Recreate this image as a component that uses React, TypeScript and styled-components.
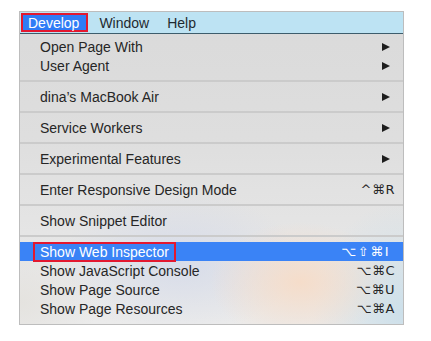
import React from "react";
import styled, { createGlobalStyle } from "styled-components";

const Global = createGlobalStyle`
  html, body { margin: 0; padding: 0; background: #ffffff; }
  body { font-family: "Liberation Sans", Arial, "DejaVu Sans", sans-serif; }
`;

const Page = styled.div`
  padding: 11px 0 0 19px;
`;

const Panel = styled.div`
  width: 383px;
  border: 1px solid #bdbdbd;
  background:
    radial-gradient(ellipse 90px 60px at 280px 270px, rgba(246, 220, 200, 0.95), rgba(246, 220, 200, 0) 100%),
    radial-gradient(ellipse 120px 70px at 160px 250px, rgba(212, 218, 234, 0.85), rgba(212, 218, 234, 0) 100%),
    radial-gradient(ellipse 90px 110px at 383px 300px, rgba(203, 223, 234, 0.95), rgba(203, 223, 234, 0) 100%),
    radial-gradient(ellipse 80px 60px at 0px 290px, rgba(228, 226, 222, 0.9), rgba(228, 226, 222, 0) 100%),
    linear-gradient(180deg, #dadada 0%, #dedede 40%, #e6e6e6 75%, #ebebeb 100%);
`;

const MenuBar = styled.div`
  display: flex;
  align-items: stretch;
  height: 21px;
  background: #bde3f3;
  border-bottom: 1px solid #3d5d6c;
`;

const BarItem = styled.div<{ $active?: boolean }>`
  display: flex;
  align-items: center;
  font-size: 14px;
  color: ${(p) => (p.$active ? "#ffffff" : "#1f2a30")};
  ${(p) =>
    p.$active
      ? `
    margin: 1px 2px 0 1px;
    height: 15px;
    padding: 0 7px 0 5px;
    background: #2f7cf6;
    border: 2px solid #e3182f;
  `
      : `
    padding: 0 9px;
  `}
`;

const List = styled.div`
  display: flex;
  flex-direction: column;
  padding: 3px 0 6px;
`;

const Row = styled.div<{ $selected?: boolean }>`
  display: flex;
  align-items: center;
  justify-content: space-between;
  height: 19px;
  padding: 0 8px 0 20px;
  font-size: 14px;
  color: ${(p) => (p.$selected ? "#ffffff" : "#262626")};
  background: ${(p) => (p.$selected ? "#3a83f6" : "transparent")};
`;

const Label = styled.span<{ $boxed?: boolean }>`
  white-space: nowrap;
  ${(p) =>
    p.$boxed
      ? `
    margin-left: -7px;
    padding: 0 5px;
    height: 16px;
    line-height: 16px;
    border: 2px solid #e3182f;
  `
      : ""}
`;

const Shortcut = styled.span<{ $inset?: boolean }>`
  font-family: "DejaVu Sans", "Liberation Sans", sans-serif;
  font-size: 13px;
  letter-spacing: ${(p) => (p.$inset ? "1.5px" : "0.5px")};
  margin-right: ${(p) => (p.$inset ? "5px" : "0")};
  white-space: nowrap;
`;

const Arrow = styled.span`
  width: 0;
  height: 0;
  margin-right: 5px;
  border-top: 4.5px solid transparent;
  border-bottom: 4.5px solid transparent;
  border-left: 8px solid #1e1e1e;
`;

const Separator = styled.div`
  height: 12px;
  display: flex;
  align-items: center;
  &::after {
    content: "";
    flex: 1;
    height: 2px;
    background: #cbcbcb;
  }
`;

type Item =
  | { kind: "sep" }
  | { kind: "item"; label: string; sub?: boolean; shortcut?: string; selected?: boolean };

const items: Item[] = [
  { kind: "item", label: "Open Page With", sub: true },
  { kind: "item", label: "User Agent", sub: true },
  { kind: "sep" },
  { kind: "item", label: "dina\u2019s MacBook Air", sub: true },
  { kind: "sep" },
  { kind: "item", label: "Service Workers", sub: true },
  { kind: "sep" },
  { kind: "item", label: "Experimental Features", sub: true },
  { kind: "sep" },
  { kind: "item", label: "Enter Responsive Design Mode", shortcut: "^\u2318R" },
  { kind: "sep" },
  { kind: "item", label: "Show Snippet Editor" },
  { kind: "sep" },
  { kind: "item", label: "Show Web Inspector", shortcut: "\u2325\u21E7\u2318I", selected: true },
  { kind: "item", label: "Show JavaScript Console", shortcut: "\u2325\u2318C" },
  { kind: "item", label: "Show Page Source", shortcut: "\u2325\u2318U" },
  { kind: "item", label: "Show Page Resources", shortcut: "\u2325\u2318A" },
];

export default function App() {
  return (
    <>
      <Global />
      <Page>
        <Panel>
          <MenuBar>
            <BarItem $active>Develop</BarItem>
            <BarItem>Window</BarItem>
            <BarItem>Help</BarItem>
          </MenuBar>
          <List>
            {items.map((it, i) =>
              it.kind === "sep" ? (
                <Separator key={i} />
              ) : (
                <Row key={i} $selected={it.selected}>
                  <Label $boxed={it.selected}>{it.label}</Label>
                  {it.sub ? (
                    <Arrow />
                  ) : it.shortcut ? (
                    <Shortcut $inset={it.selected}>{it.shortcut}</Shortcut>
                  ) : null}
                </Row>
              )
            )}
          </List>
        </Panel>
      </Page>
    </>
  );
}
